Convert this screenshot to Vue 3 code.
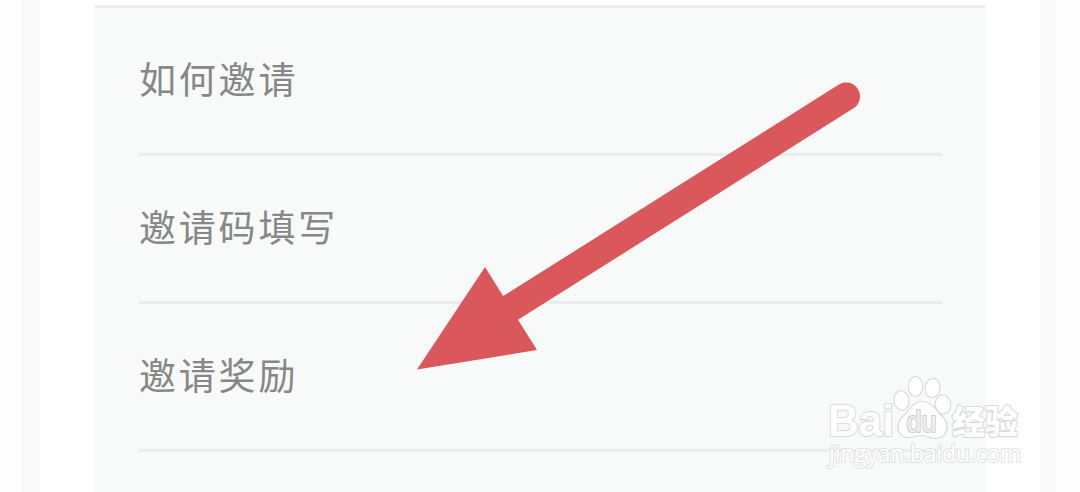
<template>
  <div class="page">
    <div class="side side-left"></div>
    <div class="content">
      <div class="panel">
        <div v-for="item in items" :key="item" class="row">{{ item }}</div>
      </div>
    </div>
    <div class="side side-right"></div>

    <svg class="overlay" viewBox="0 0 1080 492">
      <!-- pointer arrow -->
      <g class="arrow">
        <path class="shaft" d="M846 96.500 L505 311.500" />
        <path class="head" d="M417 369.500 L485 267 L537 350 Z" />
      </g>

      <!-- watermark -->
      <g class="mark">
        <text class="brand" x="828" y="436" textLength="66" lengthAdjust="spacingAndGlyphs">Bai</text>
        <ellipse cx="901.500" cy="400.500" rx="7.500" ry="9.800" transform="rotate(-8 901.500 400.500)" />
        <ellipse cx="915.500" cy="386.500" rx="7.200" ry="10" />
        <ellipse cx="932.500" cy="388" rx="7.500" ry="9.800" transform="rotate(10 932.500 388)" />
        <ellipse cx="943" cy="404.500" rx="7.800" ry="9.500" transform="rotate(-8 943 404.500)" />
        <path d="M922 401.500 C914 401.500 911.500 407 907.500 411.500 C903.500 416 898 419.500 898 427 C898 434 903 438 909 437.500 C914 437 917 435.500 922 435.500 C927 435.500 931 438.500 936 438.500 C943 438.500 947 433 947 426.500 C947 419.500 942 416 937.500 411 C933.500 406.500 930 401.500 922 401.500 Z" />
        <text class="du" x="906.500" y="432" textLength="30" lengthAdjust="spacingAndGlyphs">du</text>
        <text class="cn" x="952" y="433.500" textLength="66" lengthAdjust="spacingAndGlyphs">经验</text>
        <text class="site" x="829" y="462" textLength="192" lengthAdjust="spacingAndGlyphs">jingyan.baidu.com</text>
      </g>
    </svg>
  </div>
</template>

<script setup>
const items = ['如何邀请', '邀请码填写', '邀请奖励'];
</script>

<style>
body {
  margin: 0;
  overflow: hidden;
}
</style>

<style scoped>
.page {
  position: relative;
  display: flex;
  width: 1080px;
  height: 492px;
  overflow: hidden;
  background-color: #fff;
  font-family: "Noto Sans CJK SC", sans-serif;
}

.side {
  flex: none;
  box-sizing: border-box;
  width: 40px;
  background-color: #fdfdfd;
}

.side-left {
  border-right: 19px solid #fafafa;
}

.side-right {
  border-left: 16px solid #fafafa;
}

.content {
  flex: 1;
  padding: 5px 55px 0;
}

.panel {
  height: 487px;
  box-sizing: border-box;
  padding: 0 43px 0 44px;
  border-top: 3px solid #ededed;
  background-color: #f8faf9;
}

.row {
  display: flex;
  align-items: center;
  box-sizing: border-box;
  height: 148px;
  padding-bottom: 6px;
  border-bottom: 3px solid #ebedec;
  color: #868887;
  font-size: 37px;
  letter-spacing: 2.8px;
}

/* drawn over the list */
.overlay {
  position: absolute;
  top: 0;
  left: 0;
  width: 1080px;
  height: 492px;
}

.shaft {
  fill: none;
  stroke: #da575c;
  stroke-width: 28;
  stroke-linecap: round;
}

.head {
  fill: #da575c;
}

.mark {
  fill: #fff;
  stroke: #d9dadb;
  stroke-width: 1.2;
}

.mark text {
  paint-order: stroke;
  stroke-width: 2.2;
  stroke-linejoin: round;
}

.mark .brand {
  font: bold 44px "Liberation Sans", Arial, sans-serif;
}

.mark .du {
  font: 29px "Liberation Sans", Arial, sans-serif;
  fill: #eeefef;
  stroke: #cfd0d1;
}

.mark .cn {
  font: 900 33px "Noto Sans CJK SC", sans-serif;
}

.mark .site {
  font: 24px "Open Sans", sans-serif;
  stroke: #e1e2e3;
}
</style>
